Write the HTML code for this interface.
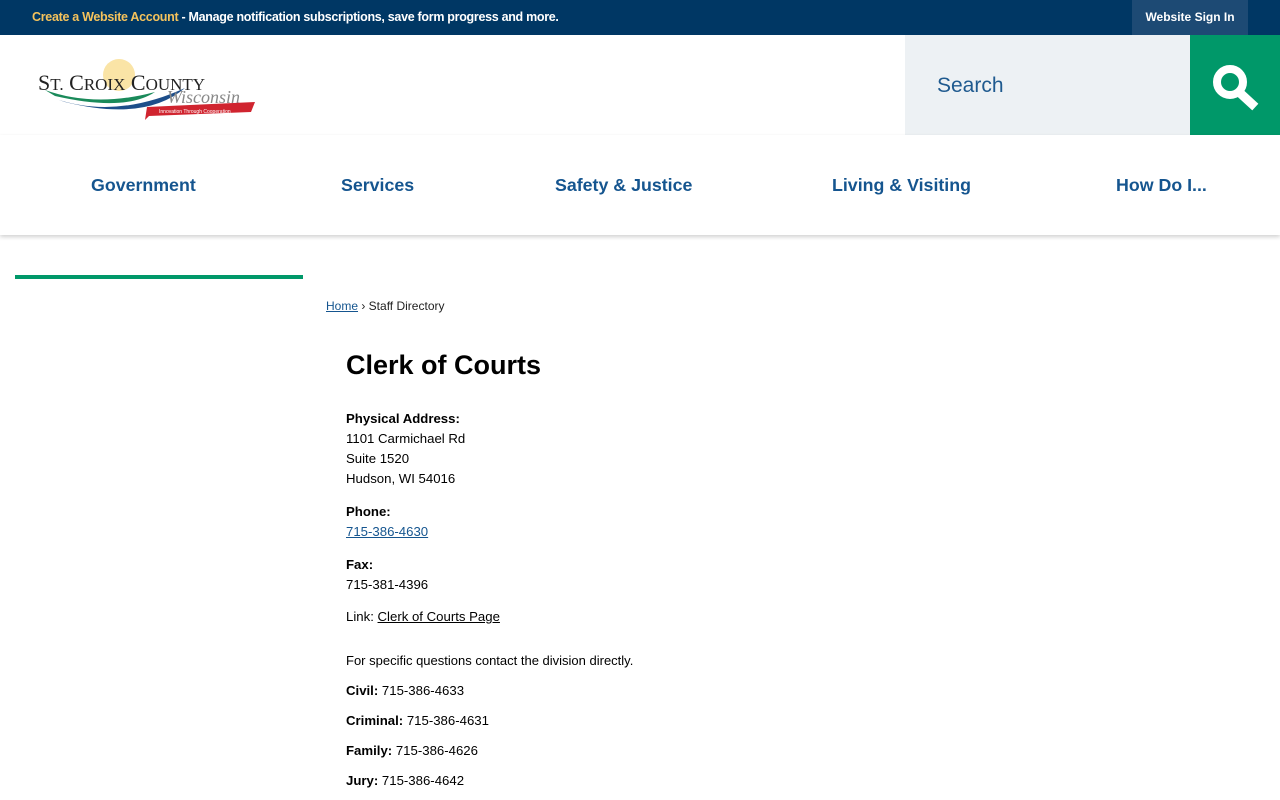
<!DOCTYPE html>
<html><head><meta charset="utf-8"><style>
*{box-sizing:border-box;margin:0;padding:0}
body{width:1280px;height:800px;overflow:hidden;background:#fff;font-family:"Liberation Sans",Arial,sans-serif;position:relative}
.top{position:absolute;top:0;left:0;width:1280px;height:35px;background:#003764;}
.top .msg{position:absolute;left:32px;top:10px;font-size:12.5px;color:#fff;font-weight:bold;letter-spacing:-0.3px}
.top .msg b{color:#f5c35c}
.signin{position:absolute;left:1132px;top:0;width:116px;height:35px;background:#1d4a74;color:#fff;font-size:12px;font-weight:bold;text-align:center;line-height:35px}
.search{position:absolute;left:905px;top:35px;width:285px;height:100px;background:#edf1f4}
.search span{position:absolute;left:32px;top:39px;font-size:21px;color:#1f5a8f}
.sbtn{position:absolute;left:1190px;top:35px;width:90px;height:100px;background:#009869}
.nav{position:absolute;top:135px;left:0;width:1280px;height:100px;background:#fff;box-shadow:0 2px 4px rgba(0,0,0,.18)}
.nav a{position:absolute;top:40px;font-size:17.8px;font-weight:bold;color:#15558f;text-decoration:none}
.bar{position:absolute;left:15px;top:275px;width:288px;height:4px;background:#009869}
.bc{position:absolute;left:326px;top:299px;font-size:12px;color:#222}
.bc a{color:#15558f;text-decoration:underline}
.c{position:absolute;left:346px;font-size:13.2px;color:#000}
h1{position:absolute;left:346px;top:350px;font-size:27px;font-weight:bold;color:#000}
.c a{color:#000}
</style></head><body>
<div class="top"><div class="msg"><b>Create a Website Account</b> - Manage notification subscriptions, save form progress and more.</div><div class="signin">Website Sign In</div></div>
<svg style="position:absolute;left:35px;top:50px" width="225" height="70">
<circle cx="84" cy="25" r="16" fill="#f7d26a" opacity=".6"/>
<path d="M10 40 Q60 58 120 42 Q90 62 20 46Z" fill="#1a8a5a"/>
<path d="M18 48 Q80 70 150 38 Q110 72 30 52Z" fill="#1d4e8a"/>
<text x="3" y="40" font-family="Liberation Serif,serif" font-size="22" fill="#222">S<tspan font-size="17">T.</tspan> C<tspan font-size="17">ROIX</tspan> C<tspan font-size="17">OUNTY</tspan></text>
<text x="132" y="53" font-family="Liberation Serif,serif" font-style="italic" font-size="18" fill="#888">Wisconsin</text>
<path d="M112 57 L220 52 L216 62 L114 66 L110 70Z" fill="#d0242f"/>
<text x="124" y="63" font-size="5" fill="#fff">Innovation Through Cooperation</text>
</svg>
<div class="search"><span>Search</span></div>
<div class="sbtn"><svg width="90" height="100"><circle cx="40" cy="47" r="13" fill="none" stroke="#fff" stroke-width="8"/><line x1="50" y1="58" x2="62" y2="69" stroke="#fff" stroke-width="9" stroke-linecap="square"/></svg></div>
<div class="nav">
<a style="left:91px">Government</a><a style="left:341px">Services</a><a style="left:555px">Safety &amp; Justice</a><a style="left:832px">Living &amp; Visiting</a><a style="left:1116px">How Do I...</a>
</div>
<div class="bar"></div>
<div class="bc"><a>Home</a> › Staff Directory</div>
<h1>Clerk of Courts</h1>
<div class="c" style="top:409px;line-height:20px"><b>Physical Address:</b><br>1101 Carmichael Rd<br>Suite 1520<br>Hudson, WI 54016</div>
<div class="c" style="top:502px;line-height:20px"><b>Phone:</b><br><a style="color:#15558f;text-decoration:underline">715-386-4630</a></div>
<div class="c" style="top:555px;line-height:20px"><b>Fax:</b><br>715-381-4396</div>
<div class="c" style="top:609px">Link: <a style="text-decoration:underline">Clerk of Courts Page</a></div>
<div class="c" style="top:653px;font-size:13px">For specific questions contact the division directly.</div>
<div class="c" style="top:683px"><b>Civil:</b> 715-386-4633</div>
<div class="c" style="top:713px"><b>Criminal:</b> 715-386-4631</div>
<div class="c" style="top:743px"><b>Family:</b> 715-386-4626</div>
<div class="c" style="top:773px"><b>Jury:</b> 715-386-4642</div>
</body></html>
